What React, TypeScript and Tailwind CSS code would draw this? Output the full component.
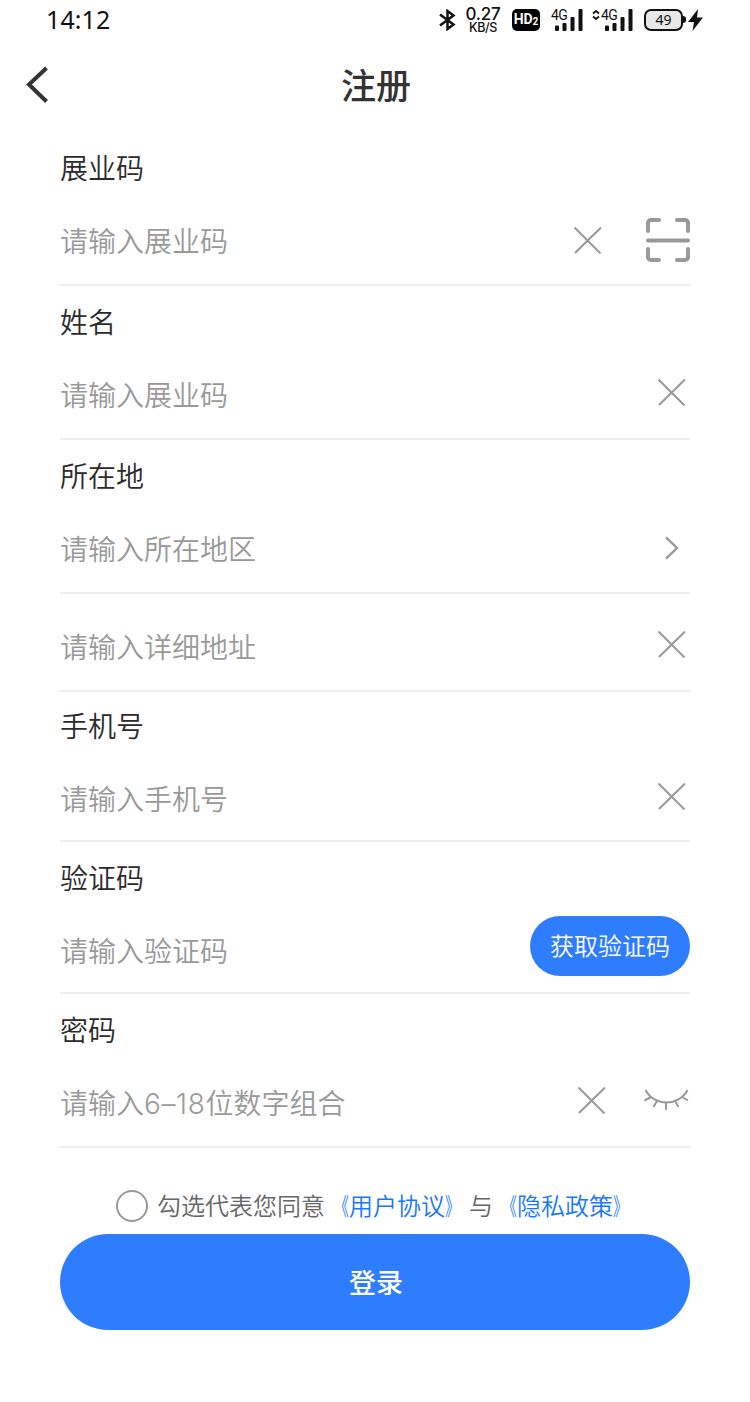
import type { ReactNode } from 'react'

interface FieldProps {
  label?: string;
  placeholder: ReactNode;
  className: string;
  children?: ReactNode;
}

function Field({ label, placeholder, className, children }: FieldProps) {
  return (
    <div className={`flex flex-col justify-end border-b-2 border-[#eeeeee] ${className}`}>
      {label && (
        <p className="mb-[33px] h-10 text-[28px] leading-10 font-[350] text-[#2b2b2b]">{label}</p>
      )}
      <div className="flex h-10 items-center justify-between">
        <p className="mb-px h-10 text-[28px] leading-10 font-[350] text-[#999999]">{placeholder}</p>
        <div className="flex items-center">{children}</div>
      </div>
    </div>
  )
}

function ClearIcon({ className }: { className: string }) {
  return (
    <svg className={className} width="28" height="28" viewBox="0 0 28 28" fill="none" stroke="#999999" strokeWidth="2">
      <path d="M.5 1.500 26.500 27.500M27 1.500 1 27" />
    </svg>
  )
}

function ScanIcon() {
  return (
    <svg width="44" height="44" viewBox="0 0 44 44" fill="none" stroke="#999999" strokeWidth="4" strokeLinecap="round">
      <path d="M2 13V5a3 3 0 0 1 3-3h8M31 2h8a3 3 0 0 1 3 3v8M42 31v8a3 3 0 0 1-3 3h-8M13 42H5a3 3 0 0 1-3-3v-8" />
      <path d="M2 22.500h40" />
    </svg>
  )
}

function ArrowIcon() {
  return (
    <svg className="mr-[10px] mb-px" width="16" height="24" viewBox="0 0 16 24" fill="none" stroke="#999999" strokeWidth="2.400">
      <path d="M2 1.300 13 12 2 22.700" />
    </svg>
  )
}

function EyeClosedIcon() {
  return (
    <svg className="mr-px mb-1" width="46" height="24" viewBox="0 0 46 24" fill="none" stroke="#999999" strokeWidth="2">
      <path d="M2.500 2C11 18.500 36 18.500 44.500 2" />
      <path d="M8 9 1.500 12.500M39 9l6 3.500M14 13l-3.500 6M32 13l3.500 6M23 14v8" />
    </svg>
  )
}

function SignalIcon() {
  return (
    <svg className="absolute right-0 bottom-0" width="28" height="22" viewBox="0 0 28 22" fill="#111111">
      <rect x="0" y="16.500" width="4" height="5.500" rx="1" />
      <rect x="7.500" y="14" width="4" height="8" rx="1" />
      <rect x="15.500" y="8" width="4" height="14" rx="1" />
      <rect x="23.500" y="0" width="4" height="22" rx="1" />
    </svg>
  )
}

function StatusBar() {
  return (
    <header className="flex h-[39px] items-center justify-between px-[46px] text-[#111111]">
      <span className="mb-px font-['Noto_Sans'] text-[25px] leading-[38px] tracking-[0.1px]">14:12</span>
      <div className="flex items-center">
        <svg className="mr-[9px]" width="18" height="22" viewBox="0 0 18 22" fill="none" stroke="#111111" strokeWidth="2.500">
          <path d="M2 5.500 15.500 15.500 9.500 20V2l6 4.500L2 16.500" />
        </svg>
        <div className="mr-[11px] flex w-[36px] flex-col items-center font-['Inter'] font-medium">
          <span className="h-[14px] text-[17px] leading-[14px] tracking-[-0.2px]">0.27</span>
          <span className="h-[12px] text-[12.500px] leading-[13px] tracking-[-0.4px]">KB/S</span>
        </div>
        <div className="mr-[11px] flex h-[22px] w-[28px] items-center justify-center rounded-[5px] bg-black font-['Roboto'] text-[14px] font-bold text-white">
          HD<span className="pt-[3px] text-[10px]">2</span>
        </div>
        <div className="relative mr-[9px] h-[22px] w-[32px]">
          <span className="absolute -top-px left-0 font-['Roboto'] text-[14px] leading-[14px] tracking-[-0.5px]">4G</span>
          <SignalIcon />
        </div>
        <div className="relative mr-[11px] h-[22px] w-[41px]">
          <svg className="absolute top-px left-0" width="8" height="10" viewBox="0 0 8 10" fill="none" stroke="#111111" strokeWidth="1.800">
            <path d="M1 3.500 4 1l3 2.500M1 6.500 4 9l3-2.500" />
          </svg>
          <span className="absolute -top-px left-[9px] font-['Roboto'] text-[14px] leading-[14px] tracking-[-0.5px]">4G</span>
          <SignalIcon />
        </div>
        <div className="flex h-[22px] w-[39px] items-center justify-center rounded-[7px] border-[2.500px] border-[#111111] bg-[#e8e8e8] font-['Noto_Sans'] text-[14px]">
          49
        </div>
        <span className="h-[7px] w-[3px] rounded-r-sm bg-[#111111]" />
        <svg className="-mr-[46px] ml-[2px]" width="15" height="22" viewBox="0 0 15 22" fill="#111111">
          <path d="M10 0 0 13h6L4.500 22 15 8.500H9z" />
        </svg>
        <span className="w-[47px]" />
      </div>
    </header>
  )
}

function AgreementLink({ name }: { name: string }) {
  return (
    <a className="text-[#1677ff]">
      <span className="inline-block origin-right scale-x-[0.62]">《</span>
      {name}
      <span className="inline-block origin-left scale-x-[0.62]">》</span>
    </a>
  )
}

export default function App() {
  return (
    <div className="h-[1402px] w-[750px] overflow-hidden bg-white font-['Noto_Sans_CJK_SC',sans-serif]">
      <StatusBar />

      <nav className="grid h-[93px] grid-cols-[100px_1fr_100px] items-center">
        <svg className="mb-px ml-[25px]" width="24" height="38" viewBox="0 0 24 38" fill="none" stroke="#333333" strokeWidth="4">
          <path d="M21.500 2 4 18.500 21.500 35.500" />
        </svg>
        <h1 className="mb-[3px] pl-[2px] text-center text-[35px] leading-[52px] font-medium text-[#333333]">注册</h1>
      </nav>

      <main className="px-[60px]">
        <Field label="展业码" placeholder="请输入展业码" className="h-[154px] pb-6">
          <ClearIcon className="mr-11" />
          <ScanIcon />
        </Field>
        <Field label="姓名" placeholder="请输入展业码" className="h-[154px] pb-6">
          <ClearIcon className="mr-1 mb-1" />
        </Field>
        <Field label="所在地" placeholder="请输入所在地区" className="h-[154px] pb-6">
          <ArrowIcon />
        </Field>
        <Field placeholder="请输入详细地址" className="h-[98px] pb-6">
          <ClearIcon className="mr-1 mb-1" />
        </Field>
        <Field label="手机号" placeholder="请输入手机号" className="h-[150px] pb-[22px]">
          <ClearIcon className="mr-1 mb-1" />
        </Field>
        <Field label="验证码" placeholder="请输入验证码" className="h-[152px] pb-[22px]">
          <button className="mb-2 h-[60px] w-[160px] rounded-full bg-[#2f7dff] pb-[2px] text-[24px] font-[350] text-white">
            获取验证码
          </button>
        </Field>
        <Field
          label="密码"
          placeholder={
            <>
              请输入<span className="font-['Inter'] tracking-[0.6px]">6–18</span>位数字组合
            </>
          }
          className="h-[154px] pb-6"
        >
          <ClearIcon className="mr-[37px] mb-1" />
          <EyeClosedIcon />
        </Field>

        <div className="mt-[39px] flex h-9 items-center pl-14 text-[24px] font-[350] whitespace-nowrap text-[#666666]">
          <span className="mt-[2px] mr-[9px] h-8 w-8 rounded-full border-2 border-[#999999]" />
          <span>勾选代表您同意</span>
          <AgreementLink name="用户协议" />
          <span>与</span>
          <AgreementLink name="隐私政策" />
        </div>

        <button className="mt-[11px] h-24 w-full rounded-full bg-[#2f7dff] pl-[2px] text-[27px] font-medium text-white">
          登录
        </button>
      </main>
    </div>
  )
}
